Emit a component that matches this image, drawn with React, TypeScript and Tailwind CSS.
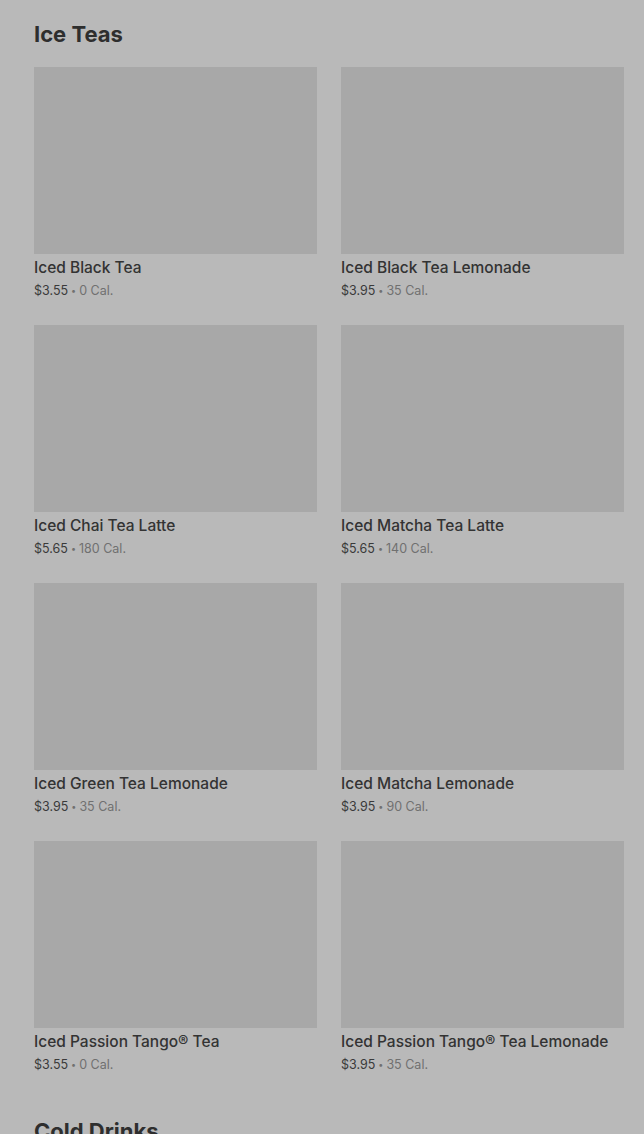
import React from "react";

const items = [
  { name: "Iced Black Tea", price: "$3.55", cal: "0 Cal." },
  { name: "Iced Black Tea Lemonade", price: "$3.95", cal: "35 Cal." },
  { name: "Iced Chai Tea Latte", price: "$5.65", cal: "180 Cal." },
  { name: "Iced Matcha Tea Latte", price: "$5.65", cal: "140 Cal." },
  { name: "Iced Green Tea Lemonade", price: "$3.95", cal: "35 Cal." },
  { name: "Iced Matcha Lemonade", price: "$3.95", cal: "90 Cal." },
  { name: "Iced Passion Tango® Tea", price: "$3.55", cal: "0 Cal." },
  { name: "Iced Passion Tango® Tea Lemonade", price: "$3.95", cal: "35 Cal." },
];

export default function App() {
  return (
    <div
      className="min-h-[1134px] w-full bg-[#b9b9b9] pl-[34px] pr-[20px] overflow-hidden"
      style={{ fontFamily: "Inter, 'Noto Sans', sans-serif" }}
    >
      <section className="pt-[20px] pb-[22px]">
        <h2 className="text-[22px] leading-[28px] font-bold text-[#2e2e2e] mb-[19px]">
          Ice Teas
        </h2>
        <div className="grid grid-cols-2 gap-x-[24px] gap-y-[24px]">
          {items.map((it) => (
            <div key={it.name} className="flex flex-col">
              <div className="h-[187px] bg-[#a8a8a8]" />
              <div className="mt-[2px] text-[15.5px] leading-[24px] font-medium text-[#333333]">
                {it.name}
              </div>
              <div className="mt-[1px] text-[12.5px] leading-[20px] text-[#3a3a3a]">
                {it.price}
                <span className="text-[#707070]">
                  <span className="text-[9px] mx-[3px] align-[1px]">•</span>
                  {it.cal}
                </span>
              </div>
            </div>
          ))}
        </div>
      </section>
      <section className="pt-[20px]">
        <h2 className="text-[22px] leading-[28px] font-bold text-[#2e2e2e]">
          Cold Drinks
        </h2>
      </section>
    </div>
  );
}
